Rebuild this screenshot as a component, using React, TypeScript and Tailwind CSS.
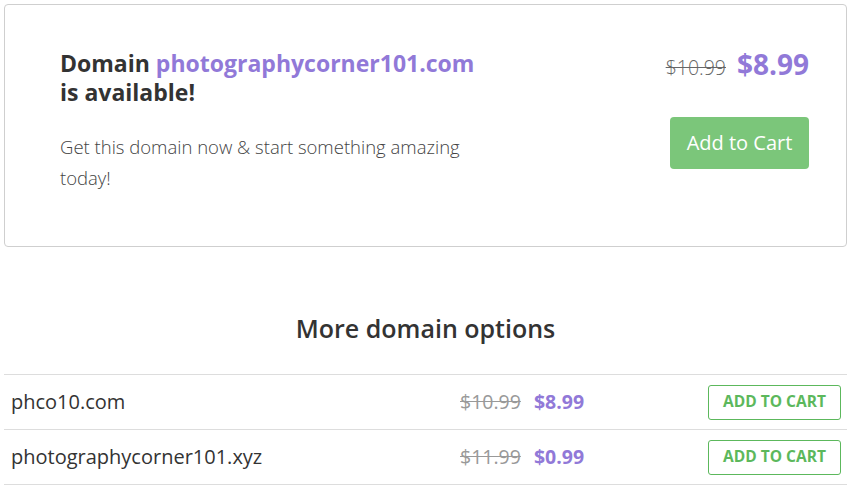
const options = [
  { name: "phco10.com", oldPrice: "$10.99", price: "$8.99" },
  { name: "photographycorner101.xyz", oldPrice: "$11.99", price: "$0.99" },
];

export default function App() {
  return (
    <div className="min-h-[487px] bg-white px-1 pt-1 font-['Open_Sans',sans-serif] text-[#333]">
      <div className="flex justify-between rounded-[4px] border border-[#cfcfcf] pb-[53px] pl-[55px] pr-[37px] pt-[44px]">
        <div className="w-[420px]">
          <h2 className="text-[23px] font-bold leading-[29px] text-[#333]">
            Domain <span className="text-[#9179d8]">photographycorner101.com</span> is available!
          </h2>
          <p className="mt-[24px] text-[18.5px] font-light leading-[31px] text-[#444]">
            Get this domain now &amp; start something amazing today!
          </p>
        </div>
        <div className="flex flex-col items-end">
          <div className="flex items-baseline gap-[11px] leading-[30px]">
            <span className="text-[19.5px] font-light text-[#666] line-through">$10.99</span>
            <span className="text-[28px] font-bold text-[#9179d8]">$8.99</span>
          </div>
          <button className="mt-[34px] h-[52px] w-[139px] rounded-[4px] bg-[#7bc67a] text-[20px] font-normal text-white">
            Add to Cart
          </button>
        </div>
      </div>

      <h3 className="mt-[64px] text-center text-[25px] font-semibold leading-[34px] text-[#333]">
        More domain options
      </h3>

      <div className="mt-[29px] border-t border-[#ddd]">
        {options.map((o) => (
          <div key={o.name} className="flex h-[55px] items-center border-b border-[#ddd] pl-[7px] pr-[6px]">
            <span className="flex-1 text-[20px] text-[#333]">{o.name}</span>
            <div className="flex w-[248px] items-baseline gap-[13px]">
              <span className="text-[19.5px] text-[#999] line-through">{o.oldPrice}</span>
              <span className="text-[19.5px] font-bold text-[#9179d8]">{o.price}</span>
            </div>
            <button className="h-[35px] w-[133px] rounded-[3px] border border-[#5cb85c] text-[15.5px] font-bold text-[#5cb85c]">
              ADD TO CART
            </button>
          </div>
        ))}
      </div>
    </div>
  );
}
